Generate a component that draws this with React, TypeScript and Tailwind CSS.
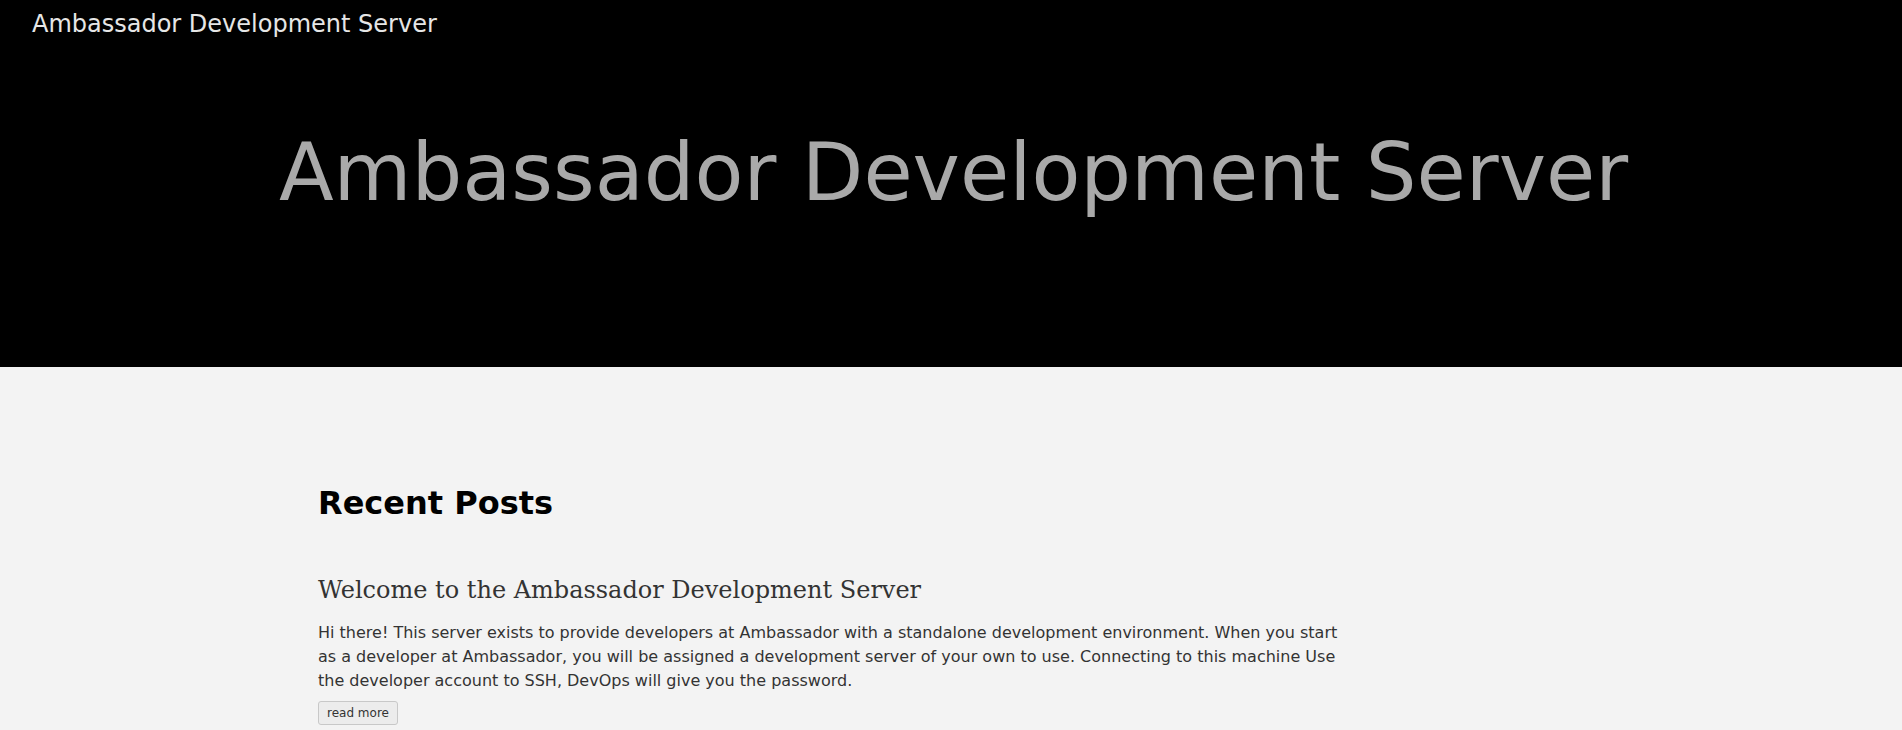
const posts = [
  {
    title: "Welcome to the Ambassador Development Server",
    excerpt:
      "Hi there! This server exists to provide developers at Ambassador with a standalone development environment. When you start as a developer at Ambassador, you will be assigned a development server of your own to use. Connecting to this machine Use the developer account to SSH, DevOps will give you the password.",
  },
];

const App = () => {
  return (
    <div className="min-h-[730px] bg-[#f3f3f3] font-['DejaVu_Sans',sans-serif]">
      <header className="h-[367px] bg-black">
        <div className="pl-8 pt-[10px] text-[24px] leading-[28px] text-[#e6e6e6]">
          Ambassador Development Server
        </div>
        <h1 className="mt-[95px] pl-[5px] text-center text-[80px] leading-[80px] text-[#a9a9a9]">
          Ambassador Development Server
        </h1>
      </header>

      <main className="pl-[318px] pt-[118px]">
        <h2 className="text-[32px] leading-[36px] font-bold text-black">
          Recent Posts
        </h2>
        <div className="mt-[53px]">
          {posts.map((post) => (
            <div key={post.title}>
              <h3 className="font-['DejaVu_Serif',serif] text-[24px] leading-[32px] text-[#333]">
                {post.title}
              </h3>
              <p className="mt-[15px] w-[1030px] text-[16px] leading-[24px] text-[#333]">
                {post.excerpt}
              </p>
              <button className="mt-[8px] h-[24px] w-[80px] rounded-[3px] border border-[#c8c8c8] bg-[#ececec] text-[12px] text-[#333]">
                read more
              </button>
            </div>
          ))}
        </div>
      </main>
    </div>
  );
};

export default App;
